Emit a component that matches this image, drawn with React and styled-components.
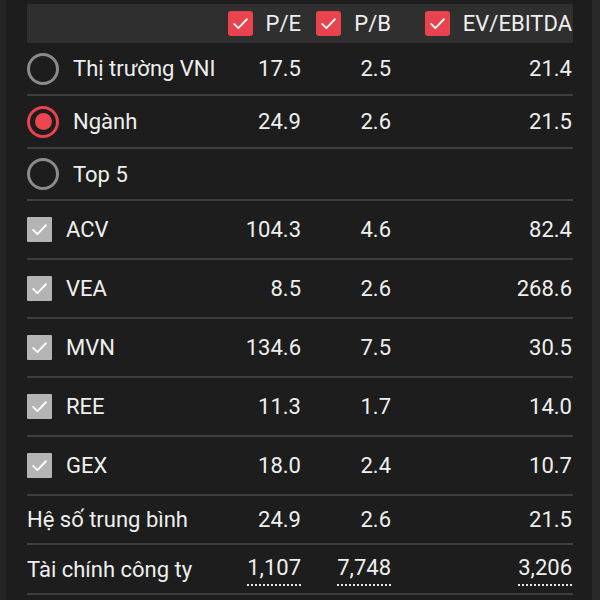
import React from 'react'
import styled, { createGlobalStyle } from 'styled-components'

const GlobalStyle = createGlobalStyle`
    html, body {
        margin: 0;
        padding: 0;
        background: #1d1d1d;
        font-family: Roboto, 'Noto Sans', sans-serif;
    }
`

const Screen = styled.div`
    display: flex;
    width: 600px;
    height: 600px;
    overflow: hidden;
    background: #1d1d1d;
`

const EdgeStrip = styled.div`
    width: ${(p) => p.w}px;
    flex: none;
    background: ${(p) => p.bg};
`

const Panel = styled.div`
    flex: 1;
    min-width: 0;
    padding: 4px 19px 0 21px;
    color: #efefef;
    font-size: 22px;
`

const Row = styled.div`
    display: grid;
    grid-template-columns: minmax(0, 1fr) 90px 90px 182px;
    align-items: center;
    height: ${(p) => p.h}px;
    box-sizing: border-box;
    border-bottom: ${(p) => (p.head ? 'none' : '2px solid #3e3e3e')};
    background: ${(p) => (p.head ? '#2f2f2f' : 'transparent')};
`

const HeadCell = styled.div`
    display: flex;
    align-items: center;
    justify-content: flex-end;
    gap: 13px;
    padding-right: ${(p) => p.pr || 0}px;
    white-space: nowrap;
`

const Label = styled.div`
    display: flex;
    align-items: center;
    gap: ${(p) => p.gap || 14}px;
    white-space: nowrap;
`

const Num = styled.div`
    text-align: right;
    padding-right: ${(p) => p.pr || 0}px;
`

const Dotted = styled.span`
    display: inline-block;
    padding-bottom: 5px;
    border-bottom: 2px dotted #e6e6e6;
    line-height: 1;
    margin-top: 4px;
`

const RadioCircle = styled.span`
    width: 32px;
    height: 32px;
    box-sizing: border-box;
    border-radius: 50%;
    border: 3px solid ${(p) => (p.on ? '#e8444f' : '#8b8b8b')};
    display: flex;
    align-items: center;
    justify-content: center;
    flex: none;
`

const RadioDot = styled.span`
    width: 17px;
    height: 17px;
    border-radius: 50%;
    background: #ec4550;
`

const Box = styled.span`
    width: 25px;
    height: 25px;
    border-radius: ${(p) => (p.red ? 3 : 1)}px;
    background: ${(p) => (p.red ? '#e8434e' : '#b4b4b4')};
    display: flex;
    align-items: center;
    justify-content: center;
    flex: none;
`

const Check = () => (
    <svg width="17" height="17" viewBox="0 0 24 24" fill="none">
        <path d="M3 12.5l6 6L21 6" stroke="#fff" strokeWidth="2.6" strokeLinecap="round" strokeLinejoin="round" />
    </svg>
)

const radios = [
    { name: 'Thị trường VNI', pe: '17.5', pb: '2.5', ev: '21.4' },
    { name: 'Ngành', pe: '24.9', pb: '2.6', ev: '21.5', on: true },
    { name: 'Top 5' },
]

const stocks = [
    { name: 'ACV', pe: '104.3', pb: '4.6', ev: '82.4' },
    { name: 'VEA', pe: '8.5', pb: '2.6', ev: '268.6' },
    { name: 'MVN', pe: '134.6', pb: '7.5', ev: '30.5' },
    { name: 'REE', pe: '11.3', pb: '1.7', ev: '14.0' },
    { name: 'GEX', pe: '18.0', pb: '2.4', ev: '10.7' },
]

const App = () => {
    return (
        <Screen>
            <GlobalStyle />
            <EdgeStrip w={6} bg="#242424" />
            <Panel>
                <Row head h={39}>
                    <div />
                    <HeadCell><Box red><Check /></Box>P/E</HeadCell>
                    <HeadCell><Box red><Check /></Box>P/B</HeadCell>
                    <HeadCell pr={1}><Box red><Check /></Box>EV/EBITDA</HeadCell>
                </Row>
                {radios.map((r, i) => (
                    <Row key={r.name} h={i === 2 ? 52 : 53}>
                        <Label>
                            <RadioCircle on={r.on}>{r.on && <RadioDot />}</RadioCircle>
                            {r.name}
                        </Label>
                        <Num>{r.pe}</Num>
                        <Num>{r.pb}</Num>
                        <Num pr={1}>{r.ev}</Num>
                    </Row>
                ))}
                {stocks.map((s) => (
                    <Row key={s.name} h={59}>
                        <Label>
                            <Box><Check /></Box>
                            {s.name}
                        </Label>
                        <Num>{s.pe}</Num>
                        <Num>{s.pb}</Num>
                        <Num pr={1}>{s.ev}</Num>
                    </Row>
                ))}
                <Row h={49}>
                    <Label>Hệ số trung bình</Label>
                    <Num>24.9</Num>
                    <Num>2.6</Num>
                    <Num pr={1}>21.5</Num>
                </Row>
                <Row h={50}>
                    <Label>Tài chính công ty</Label>
                    <Num><Dotted>1,107</Dotted></Num>
                    <Num><Dotted>7,748</Dotted></Num>
                    <Num pr={1}><Dotted>3,206</Dotted></Num>
                </Row>
            </Panel>
            <EdgeStrip w={8} bg="#292929" />
        </Screen>
    )
}

export default App
